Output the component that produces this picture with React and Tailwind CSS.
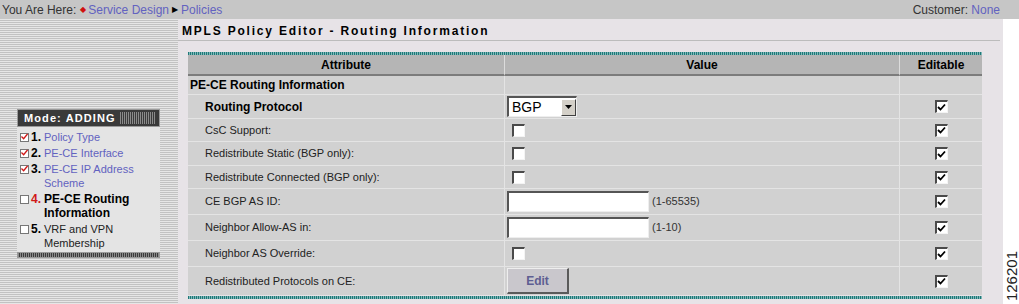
import React from 'react';

// Checkbox drawn like the old Windows classic control
function Box({ checked = false }) {
  return (
    <span className="inline-flex w-[13px] h-[13px] bg-white border-t-2 border-l-2 border-t-[#4a4a4a] border-l-[#4a4a4a] border-r border-b border-r-[#f4f4f4] border-b-[#f4f4f4] items-center justify-center">
      {checked && (
        <svg width="9" height="9" viewBox="0 0 9 9">
          <path d="M1 4 L3.5 6.5 L8 1.5" fill="none" stroke="#000" strokeWidth="1.8" />
        </svg>
      )}
    </span>
  );
}

function SideBox({ checked = false }) {
  return (
    <span className="inline-flex w-[9px] h-[9px] bg-white border border-[#777] items-center justify-center shrink-0">
      {checked && (
        <svg width="8" height="8" viewBox="0 0 8 8">
          <path d="M0.5 3.5 L3 6 L7.5 0.5" fill="none" stroke="#d01818" strokeWidth="1.6" />
        </svg>
      )}
    </span>
  );
}

function TextInput() {
  return (
    <span className="inline-block w-[142px] h-[21px] bg-white border-t-2 border-l-2 border-t-[#555] border-l-[#555] border-r border-b border-r-[#eee] border-b-[#eee]" />
  );
}

function Select() {
  return (
    <span className="inline-flex w-[70px] h-[21px] bg-white border-t-2 border-l-2 border-t-[#555] border-l-[#555] border-r border-b border-r-[#eee] border-b-[#eee] items-center">
      <span className="flex-1 pl-[3px] text-[14px] text-black leading-none">BGP</span>
      <span className="w-[15px] h-[17px] bg-[#d4d0c8] border-t border-l border-t-white border-l-white border-r border-b border-r-[#404040] border-b-[#404040] flex items-center justify-center">
        <svg width="7" height="4" viewBox="0 0 7 4">
          <path d="M0 0 H7 L3.5 4 Z" fill="#000" />
        </svg>
      </span>
    </span>
  );
}

const rows = [
  { label: 'Routing Protocol', bold: true, h: 'h-[24px]', value: <Select /> },
  { label: 'CsC Support:', h: 'h-[23px]', value: <Box /> },
  { label: 'Redistribute Static (BGP only):', h: 'h-[24px]', value: <Box /> },
  { label: 'Redistribute Connected (BGP only):', h: 'h-[23px]', value: <Box /> },
  { label: 'CE BGP AS ID:', h: 'h-[26px]', value: <><TextInput /><span className="ml-[3px] text-[11px] text-[#333]">(1-65535)</span></> },
  { label: 'Neighbor Allow-AS in:', h: 'h-[26px]', value: <><TextInput /><span className="ml-[3px] text-[11px] text-[#333]">(1-10)</span></> },
  { label: 'Neighbor AS Override:', h: 'h-[26px]', value: <Box /> },
  {
    label: 'Redistributed Protocols on CE:',
    h: 'h-[29px]',
    value: (
      <span className="inline-flex w-[62px] h-[26px] bg-[#c9c7cc] border-t border-l border-t-[#eee] border-l-[#eee] border-r-2 border-b-2 border-r-[#5a5a5a] border-b-[#5a5a5a] items-center justify-center text-[12px] font-bold text-[#5e5e92]">
        Edit
      </span>
    ),
  },
];

const steps = [
  { n: '1.', lines: ['Policy Type'], done: true },
  { n: '2.', lines: ['PE-CE Interface'], done: true },
  { n: '3.', lines: ['PE-CE IP Address', 'Scheme'], done: true },
  { n: '4.', lines: ['PE-CE Routing', 'Information'], current: true },
  { n: '5.', lines: ['VRF and VPN', 'Membership'] },
];

const teal = 'h-[3px] bg-[repeating-linear-gradient(90deg,#1f7878_0px,#1f7878_1px,#7fb8b8_1px,#7fb8b8_2px)]';

export default function App() {
  return (
    <div className="w-[1019px] h-[304px] flex flex-col overflow-hidden bg-white font-['Liberation_Sans',Arial,sans-serif]">
      {/* breadcrumb bar */}
      <div className="h-[19px] bg-[#c6c6c6] flex items-center justify-between pl-[2px] pr-[19px] text-[12px] text-[#333]">
        <div className="flex items-center">
          <span>You Are Here:</span>
          <span className="ml-[4px] text-[#d01010] text-[8px]">◆</span>
          <span className="ml-[2px] text-[#6262c0]">Service Design</span>
          <span className="mx-[3px] text-black text-[8px]">▶</span>
          <span className="text-[#6262c0]">Policies</span>
        </div>
        <div>
          Customer: <span className="text-[#6262c0]">None</span>
        </div>
      </div>

      <div className="flex-1 flex">
        {/* left navigation */}
        <div className="w-[178px] bg-[repeating-linear-gradient(180deg,#e6e6e6_0px,#e6e6e6_1px,#c2c2c2_1px,#c2c2c2_2px)] pt-[90px] pl-[17px]">
          <div className="w-[143px] bg-[#e4e4e4]">
            <div className="h-[18px] bg-[#3a3a3a] border border-[#9a9a9a] flex items-center">
              <span className="pl-[6px] pr-[4px] text-[11px] font-bold tracking-[1.1px] text-white">Mode: ADDING</span>
              <span className="flex-1 h-[12px] mr-[3px] bg-[repeating-linear-gradient(90deg,#8a8a8a_0px,#8a8a8a_1px,#3a3a3a_1px,#3a3a3a_2px)]" />
            </div>
            <div className="flex flex-col gap-[2px] pt-[3px] pb-[2px] pl-[3px] text-[11px] leading-[14px]">
              {steps.map((s) => (
                <div key={s.n} className="flex">
                  <span className="w-[11px] h-[14px] flex items-center">
                    <SideBox checked={s.done} />
                  </span>
                  <span className={`w-[13px] text-[12px] font-bold ${s.current ? 'text-[#d01818]' : 'text-black'}`}>{s.n}</span>
                  <div className={s.current ? 'font-bold text-black text-[12px]' : s.done ? 'text-[#6262c0]' : 'text-[#222]'}>
                    {s.lines.map((l) => (
                      <div key={l}>{l}</div>
                    ))}
                  </div>
                </div>
              ))}
            </div>
            <div className="h-[6px] bg-[#3a3a3a] border border-[#9a9a9a] bg-[repeating-linear-gradient(90deg,#8a8a8a_0px,#8a8a8a_1px,#3a3a3a_1px,#3a3a3a_2px)]" />
          </div>
        </div>

        {/* main editor */}
        <div className="w-[825px] bg-[#e7e3e7] flex flex-col">
          <div className="h-[22px] border-b border-[#bcbcbc] mr-[3px] flex items-center pl-[4px] pt-[2px]">
            <span className="text-[12px] font-bold tracking-[1.8px] text-black">MPLS Policy Editor - Routing Information</span>
          </div>
          <div className="ml-[10px] mt-[11px] w-[794px]">
            <div className={teal} />
            <div className="grid grid-cols-[317px_395px_82px] bg-[#d1d1d1] text-[11px] text-[#222]">
              <div className="h-[21px] bg-[#b5b5b5] border-b-2 border-b-[#7c7c7c] border-r border-r-[#dcdcdc] flex items-center justify-center text-[12px] font-bold text-black">Attribute</div>
              <div className="h-[21px] bg-[#b5b5b5] border-b-2 border-b-[#7c7c7c] border-r border-r-[#dcdcdc] flex items-center justify-center text-[12px] font-bold text-black">Value</div>
              <div className="h-[21px] bg-[#b5b5b5] border-b-2 border-b-[#7c7c7c] flex items-center justify-center text-[12px] font-bold text-black">Editable</div>

              <div className="h-[18px] border-r border-r-[#e4e4e4] flex items-center pl-[2px] text-[12px] font-bold text-black">PE-CE Routing Information</div>
              <div className="h-[18px] border-r border-r-[#e4e4e4]" />
              <div className="h-[18px]" />

              {rows.map((r) => (
                <React.Fragment key={r.label}>
                  <div className={`${r.h} border-t border-t-[#e4e4e4] border-r border-r-[#e4e4e4] flex items-center pl-[17px] ${r.bold ? 'text-[12px] font-bold text-black' : ''}`}>
                    {r.label}
                  </div>
                  <div className={`${r.h} border-t border-t-[#e4e4e4] border-r border-r-[#e4e4e4] flex items-center pl-[2px]`}>
                    {r.value && r.value.type === Box ? <span className="ml-[5px] flex">{r.value}</span> : r.value}
                  </div>
                  <div className={`${r.h} border-t border-t-[#e4e4e4] flex items-center justify-center`}>
                    <Box checked />
                  </div>
                </React.Fragment>
              ))}
            </div>
            <div className="h-[1px]" />
            <div className={teal} />
          </div>
        </div>

        {/* right margin with figure number */}
        <div className="flex-1 flex flex-col justify-end items-center pb-[3px]">
          <span className="[writing-mode:vertical-rl] rotate-180 text-[15px] text-[#222] leading-none">126201</span>
        </div>
      </div>
    </div>
  );
}
